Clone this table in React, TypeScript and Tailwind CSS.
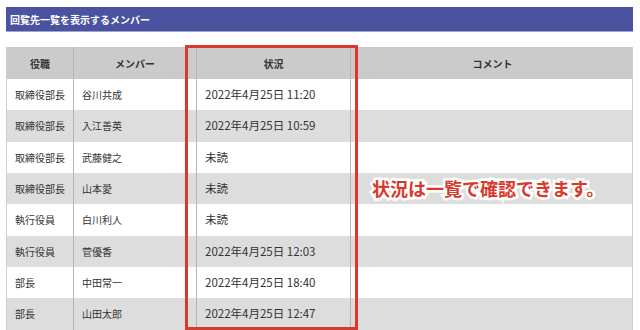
const rows: [string, string, string][] = [
  ["取締役部長", "谷川共成", "2022年4月25日 11:20"],
  ["取締役部長", "入江善英", "2022年4月25日 10:59"],
  ["取締役部長", "武藤健之", "未読"],
  ["取締役部長", "山本愛", "未読"],
  ["執行役員", "白川利人", "未読"],
  ["執行役員", "菅優香", "2022年4月25日 12:03"],
  ["部長", "中田常一", "2022年4月25日 18:40"],
  ["部長", "山田太郎", "2022年4月25日 12:47"],
];

const cols = "grid grid-cols-[66px_123px_154px_284px]";

export default function App() {
  return (
    <div className="relative h-[330px] w-[640px] overflow-hidden bg-white font-['Noto_Sans_CJK_JP',sans-serif] text-[#333]">
      <div className="px-[6px] pt-[7px]">
        {/* section title */}
        <div className="flex h-[25px] w-[627px] items-center border-b border-[#9ea3cf] bg-[#4b529f] pl-1 text-[10px] font-bold text-white">
          回覧先一覧を表示するメンバー
        </div>

        <div className="mt-[15px] w-[627px] border-x border-[#cfcfcf]">
          <div className={`${cols} h-[32px] bg-[#cbcbcb] text-[10px] font-bold`}>
            <div className="flex items-center justify-center">役職</div>
            <div className="flex items-center justify-center border-l border-[#b5b5b5]">メンバー</div>
            <div className="flex items-center justify-center border-l border-[#b5b5b5]">状況</div>
            <div className="flex items-center justify-center border-l border-[#b5b5b5]">コメント</div>
          </div>
          {rows.map(([role, name, status], i) => (
            <div
              key={i}
              className={`${cols} h-[31.33px] ${i % 2 === 0 ? "bg-white" : "bg-[#dddddd]"}`}
            >
              <div className="flex items-center pl-2 text-[10px]">{role}</div>
              <div className="flex items-center border-l border-[#b5b5b5] pl-2 text-[10px]">{name}</div>
              <div className="flex items-center border-l border-[#b5b5b5] pl-[8px] text-[11.5px]">{status}</div>
              <div className="border-l border-[#b5b5b5]" />
            </div>
          ))}
        </div>
      </div>

      {/* annotation overlay */}
      <div className="absolute left-[185px] top-[45px] h-[285px] w-[173px] border-[3px] border-[#d8392b]" />
      <div className="absolute left-[372px] top-[176px] text-[18px] font-bold leading-[24px] text-[#d8392b] [-webkit-text-stroke:5px_white] [paint-order:stroke_fill]">
        状況は一覧で確認できます。
      </div>
    </div>
  );
}
